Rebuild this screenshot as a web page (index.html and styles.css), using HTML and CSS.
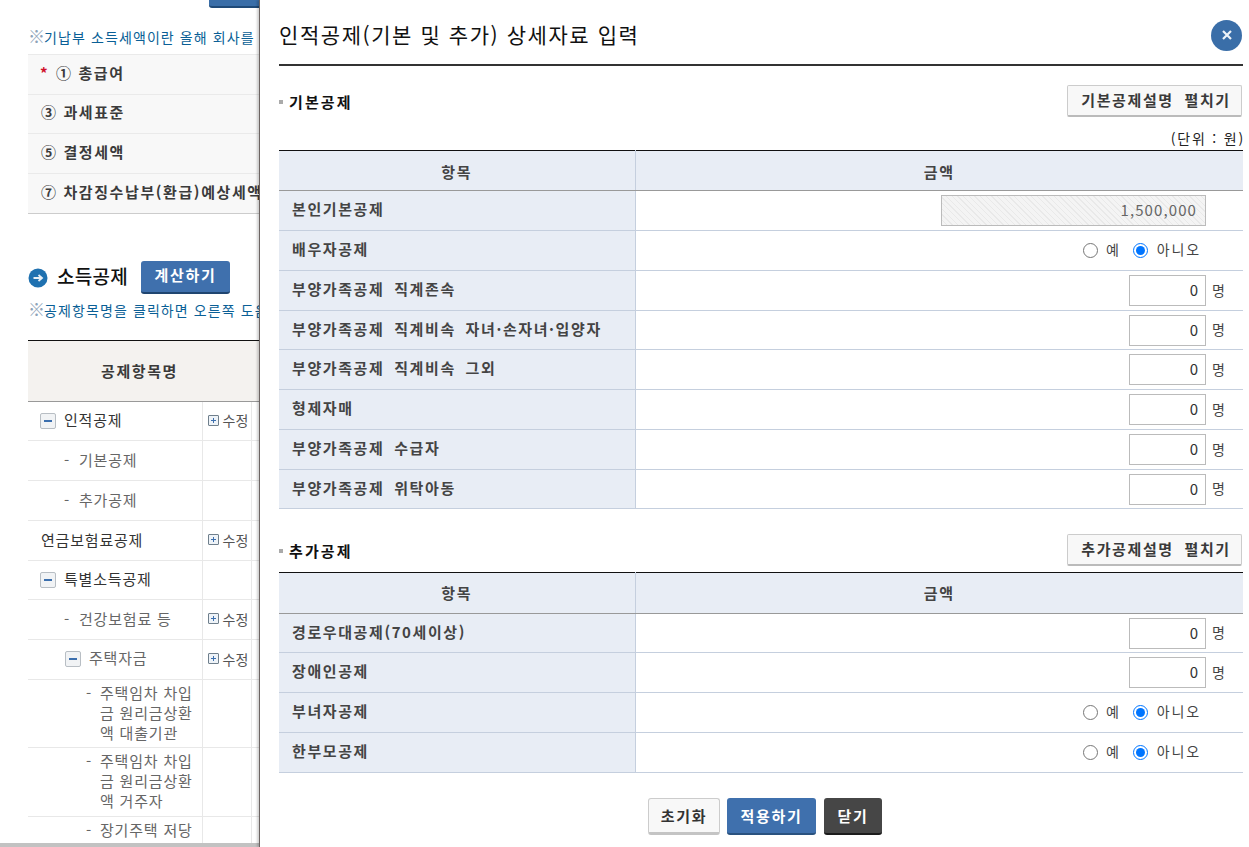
FILE: index.html
```html
<!DOCTYPE html>
<html lang="ko">
<head>
<meta charset="utf-8">
<title>인적공제</title>
<link rel="stylesheet" href="styles.css">
</head>
<body>
<div class="page">
  <div class="bg">
    <div class="top-btn-wrap"><span class="top-btn"></span></div>
    <p class="note note-first"><span class="ref">※</span>기납부 소득세액이란 올해 회사를 다니면서 납부한 세액입니다</p>
    <table class="sum">
      <tr><td><span class="star">*</span>① 총급여</td></tr>
      <tr class="h39"><td>③ 과세표준</td></tr>
      <tr><td>⑤ 결정세액</td></tr>
      <tr><td>⑦ 차감징수납부(환급)예상세액</td></tr>
    </table>
    <div class="sec-head">
      <svg class="arrow" width="20" height="20" viewBox="0 0 20 20"><circle cx="10" cy="10" r="9.5" fill="#1f71b0"/><path d="M5.5 10H13M10.5 7l3.5 3-3.5 3" fill="none" stroke="#e8f0f6" stroke-width="1.8"/></svg>
      <h2>소득공제</h2>
      <span class="calc">계산하기</span>
    </div>
    <p class="note note-second"><span class="ref">※</span>공제항목명을 클릭하면 오른쪽 도움말이 표시됩니다</p>
    <table class="tree">
      <colgroup><col class="c1"><col class="c2"><col class="c3"></colgroup>
      <tr class="hd"><th colspan="2">공제항목명</th><th></th></tr>
      <tr class="h39"><td class="l0"><i class="minus"></i>인적공제</td><td class="ed"><span class="edit"><i class="plus"></i>수정</span></td><td></td></tr>
      <tr><td class="l1"><span class="dash">-</span>기본공제</td><td></td><td></td></tr>
      <tr><td class="l1"><span class="dash">-</span>추가공제</td><td></td><td></td></tr>
      <tr><td class="l00">연금보험료공제</td><td class="ed"><span class="edit"><i class="plus"></i>수정</span></td><td></td></tr>
      <tr class="h39"><td class="l0"><i class="minus"></i>특별소득공제</td><td></td><td></td></tr>
      <tr><td class="l1"><span class="dash">-</span>건강보험료 등</td><td class="ed"><span class="edit"><i class="plus"></i>수정</span></td><td></td></tr>
      <tr><td class="l1m"><i class="minus"></i>주택자금</td><td class="ed"><span class="edit"><i class="plus"></i>수정</span></td><td></td></tr>
      <tr class="tall"><td class="l2"><span class="dash2">-</span>주택임차 차입금 원리금상환액 대출기관</td><td></td><td></td></tr>
      <tr class="tall2"><td class="l2"><span class="dash2">-</span>주택임차 차입금 원리금상환액 거주자</td><td></td><td></td></tr>
      <tr class="tall2"><td class="l2"><span class="dash2">-</span>장기주택 저당차입금 이자상환액</td><td></td><td></td></tr>
    </table>
  </div>
  <div class="hscroll"></div>

  <section class="panel">
    <header class="panel-head">
      <h1>인적공제(기본 및 추가) 상세자료 입력</h1>
      <span class="close"><svg width="12" height="12" viewBox="0 0 12 12"><path d="M2 2l8 8M10 2l-8 8" stroke="#eef3f8" stroke-width="2.2"/></svg></span>
    </header>

    <div class="sub first">
      <h3>기본공제</h3>
      <span class="ghost">기본공제설명 펼치기</span>
    </div>
    <p class="unit">(단위 : 원)</p>
    <table class="form">
      <colgroup><col class="fa"><col></colgroup>
      <tr class="fh"><th>항목</th><th>금액</th></tr>
      <tr><th>본인기본공제</th><td><span class="ro">1,500,000</span></td></tr>
      <tr><th>배우자공제</th><td><span class="yn"><input type="radio" name="a"><span>예</span><input type="radio" name="a" checked><span>아니오</span></span></td></tr>
      <tr><th>부양가족공제 직계존속</th><td><span class="qty"><span class="num">0</span><span>명</span></span></td></tr>
      <tr class="h39"><th>부양가족공제 직계비속 자녀·손자녀·입양자</th><td><span class="qty"><span class="num">0</span><span>명</span></span></td></tr>
      <tr><th>부양가족공제 직계비속 그외</th><td><span class="qty"><span class="num">0</span><span>명</span></span></td></tr>
      <tr><th>형제자매</th><td><span class="qty"><span class="num">0</span><span>명</span></span></td></tr>
      <tr><th>부양가족공제 수급자</th><td><span class="qty"><span class="num">0</span><span>명</span></span></td></tr>
      <tr class="h39"><th>부양가족공제 위탁아동</th><td><span class="qty"><span class="num">0</span><span>명</span></span></td></tr>
    </table>

    <div class="sub second">
      <h3>추가공제</h3>
      <span class="ghost">추가공제설명 펼치기</span>
    </div>
    <table class="form">
      <colgroup><col class="fa"><col></colgroup>
      <tr class="fh fh2"><th>항목</th><th>금액</th></tr>
      <tr class="h39"><th>경로우대공제(70세이상)</th><td><span class="qty"><span class="num">0</span><span>명</span></span></td></tr>
      <tr><th>장애인공제</th><td><span class="qty"><span class="num">0</span><span>명</span></span></td></tr>
      <tr><th>부녀자공제</th><td><span class="yn"><input type="radio" name="b"><span>예</span><input type="radio" name="b" checked><span>아니오</span></span></td></tr>
      <tr><th>한부모공제</th><td><span class="yn"><input type="radio" name="c"><span>예</span><input type="radio" name="c" checked><span>아니오</span></span></td></tr>
    </table>

    <div class="actions">
      <span class="btn reset">초기화</span>
      <span class="btn apply">적용하기</span>
      <span class="btn shut">닫기</span>
    </div>
  </section>
</div>
</body>
</html>
```
FILE: styles.css
```css
* { box-sizing: border-box; }
html, body { margin: 0; padding: 0; background: #fff; }
body { font-family: "Noto Sans CJK KR", "Noto Sans", sans-serif; font-size: 14px; color: #333; overflow: hidden; }
.page { position: relative; width: 1249px; height: 847px; overflow: hidden; }

.bg { width: 260px; height: 847px; padding-left: 28px; overflow: hidden; }
.top-btn-wrap { height: 8px; padding-left: 181px; }
.top-btn { display: block; width: 60px; height: 8px; background: #3a6ea8; border-bottom: 2px solid #1f4a78; border-radius: 0 0 3px 3px; }
.note { width: 420px; margin: 0; color: #0a5f96; font-size: 14px; line-height: 20px; letter-spacing: 1.1px; white-space: nowrap; }
.ref { display: inline-block; width: 16px; color: #8ea3b8; font-size: 17px; line-height: 18px; letter-spacing: 0; }
.note-first { margin-top: 19px; }
.sum { width: 420px; margin-top: 7px; border-collapse: collapse; border-top: 1px solid #ccc; border-bottom: 1px solid #ccc; background: #f8f8f8; }
.sum td { height: 40px; padding: 0 0 5px 13px; border-top: 1px solid #eaeaea; font-weight: 700; font-size: 15px; letter-spacing: 1.6px; color: #3b3b3b; white-space: nowrap; }
.sum .h39 td { height: 39px; }
.star { display: inline-block; width: 16px; color: #d0102a; margin-left: -1px; }
.sec-head { display: flex; align-items: center; width: 300px; height: 33px; margin-top: 47px; }
.arrow { display: block; flex: none; }
.sec-head h2 { margin: 0 13px 5px 9px; font-size: 19px; font-weight: 500; color: #111; letter-spacing: 0.25px; }
.calc { display: flex; align-items: center; justify-content: center; width: 89px; height: 33px; padding-bottom: 5px; background: #3f70ad; border-bottom: 2px solid #1f4570; border-radius: 3px; color: #fff; font-weight: 700; font-size: 15px; letter-spacing: 1.7px; }
.note-second { margin-top: 6px; }

.tree { width: 420px; margin-top: 20px; table-layout: fixed; border-collapse: collapse; border-top: 1px solid #111; }
.c1 { width: 174px; }
.c2 { width: 49px; }
.tree th { height: 61px; padding: 0 0 2px; background: #f4f2ef; border-bottom: 1px solid #999; font-size: 15px; letter-spacing: 1.6px; color: #3a3a3a; font-weight: 700; }
.tree td { height: 40px; padding: 0; border-bottom: 1px solid #e8e8e8; border-right: 1px solid #e8e8e8; font-size: 15px; letter-spacing: 0.8px; line-height: 20px; color: #666; vertical-align: middle; }
.tree .h39 td { height: 39px; }
.tree .tall td { height: 68px; }
.tree .tall2 td { height: 69px; }
.tree td.ed { padding-bottom: 2px; }
.tree td.l0 { padding: 0 0 2px 12px; color: #333; }
.tree td.l00 { padding: 0 0 2px 13px; color: #333; }
.tree td.l1 { padding: 0 0 2px 36px; }
.tree td.l1m { padding: 0 0 3px 37px; }
.tree td.l2 { padding: 0 4px 2px 72px; }
.dash { display: inline-block; width: 15px; }
.dash2 { display: inline-block; width: 14px; margin-left: -14px; }
.minus { position: relative; display: inline-block; width: 16px; height: 16px; margin-right: 8px; vertical-align: -3px; border: 1px solid #b8bec4; border-radius: 2px; background: #f1f3f5; }
.minus::after { content: ""; position: absolute; left: 3px; top: 6px; width: 8px; height: 2px; background: #3c6fae; }
.edit { display: flex; align-items: center; padding-left: 5px; font-size: 14px; letter-spacing: 0; color: #555; white-space: nowrap; }
.plus { position: relative; display: block; width: 11px; height: 11px; margin-right: 4px; border: 1px solid #6f7f8c; border-radius: 1px; background: #eef3f8; }
.plus::before { content: ""; position: absolute; left: 2px; top: 4px; width: 5px; height: 1px; background: #3c6fae; }
.plus::after { content: ""; position: absolute; left: 4px; top: 2px; width: 1px; height: 5px; background: #3c6fae; }

.hscroll { position: absolute; left: 0; bottom: 0; width: 260px; height: 4px; background: #c2c2c2; }

.panel { position: absolute; left: 259px; top: 0; width: 990px; height: 847px; padding: 0 6px 0 19px; background: #fff; border-left: 1px solid #6d6563; box-shadow: -2px 0 2px rgba(0,0,0,.18); }
.panel-head { display: flex; align-items: center; justify-content: space-between; height: 66px; padding-top: 3px; border-bottom: 2px solid #333; }
.panel-head h1 { margin: 0; font-size: 21px; font-weight: 400; color: #111; letter-spacing: 1.57px; }
.close { display: flex; align-items: center; justify-content: center; width: 31px; height: 31px; margin-right: 1px; margin-top: 3px; border-radius: 50%; background: #3a6ea8; }
.sub { display: flex; align-items: center; justify-content: space-between; height: 32px; }
.sub.first { margin-top: 19px; }
.sub.second { margin-top: 25px; }
.sub h3 { position: relative; margin: 0; padding-left: 10px; font-size: 15px; font-weight: 700; color: #111; letter-spacing: 2.1px; }
.sub h3::before { content: ""; position: absolute; left: 0; top: 9px; width: 4px; height: 4px; background: #aaa; }
.ghost { display: flex; align-items: center; justify-content: center; width: 175px; height: 32px; margin-right: 1px; padding: 0 0 2px 3px; border: 1px solid #ccc; border-bottom: 2px solid #bbb; border-radius: 2px; background: #f8f8f8; font-weight: 700; font-size: 15px; letter-spacing: 1.6px; word-spacing: 5px; color: #3a3a3a; }
.unit { margin: 0 -2px 0 0; height: 33px; padding-top: 11px; text-align: right; font-size: 14px; line-height: 20px; letter-spacing: 1.8px; color: #222; white-space: nowrap; }
.form { width: 964px; table-layout: fixed; border-collapse: collapse; border-top: 1px solid #111; }
.sub.second + .form { margin-top: 6px; }
.fa { width: 356px; }
.form th, .form td { height: 40px; padding: 0; border-bottom: 1px solid #c5cfde; }
.form .h39 th, .form .h39 td { height: 39px; }
.form th { padding-left: 13px; padding-bottom: 4px; background: #e8edf5; font-weight: 700; font-size: 15px; letter-spacing: 1.6px; word-spacing: 4px; color: #444; text-align: left; border-right: 1px solid #c5cfde; white-space: nowrap; }
.form .fh th { height: 40px; padding: 2px 0 0; text-align: center; border-bottom: 1px solid #999; }
.form .fh2 th { height: 41px; padding: 0 0 2px; }
.form .fh th + th { border-right: 0; }
.form td { text-align: right; padding-right: 18px; font-size: 15px; color: #444; }
.ro { display: inline-flex; align-items: center; justify-content: flex-end; width: 265px; height: 31px; padding: 0 8px 2px 0; margin-right: 19px; border: 1px solid #bbb; background: repeating-linear-gradient(45deg, #f4f4f4 0 3px, #e9e9e9 3px 4px); color: #666; letter-spacing: 1.1px; font-size: 15px; }
.qty { display: inline-flex; align-items: center; }
.num { display: flex; align-items: center; justify-content: flex-end; width: 77px; height: 31px; padding: 0 7px 2px 0; margin-right: 6px; border: 1px solid #bbb; background: #fff; font-size: 15px; color: #333; }
.qty > span:last-child { padding-bottom: 2px; font-size: 14px; }
.yn { display: inline-flex; align-items: center; padding-right: 24px; font-size: 14px; letter-spacing: 1.9px; }
.yn span { padding-bottom: 2px; }
.yn input { width: 15px; height: 15px; margin: 2px 8px 0 0; }
.yn span + input { margin: 2px 9px 0 12px; }
.actions { display: flex; justify-content: center; gap: 7px; margin-top: 25px; padding-left: 8px; }
.btn { display: flex; align-items: center; justify-content: center; height: 37px; padding-bottom: 1px; border-radius: 3px; font-weight: 700; font-size: 15px; letter-spacing: 1.7px; }
.reset { width: 72px; background: #f8f8f8; border: 1px solid #ccc; border-bottom: 3px solid #c4c4c4; color: #333; }
.apply { width: 89px; background: #3f70ad; border-bottom: 2px solid #2a527f; color: #fff; }
.shut { width: 58px; margin-left: 1px; background: #464646; border-bottom: 2px solid #1c1c1c; color: #fff; }
```
